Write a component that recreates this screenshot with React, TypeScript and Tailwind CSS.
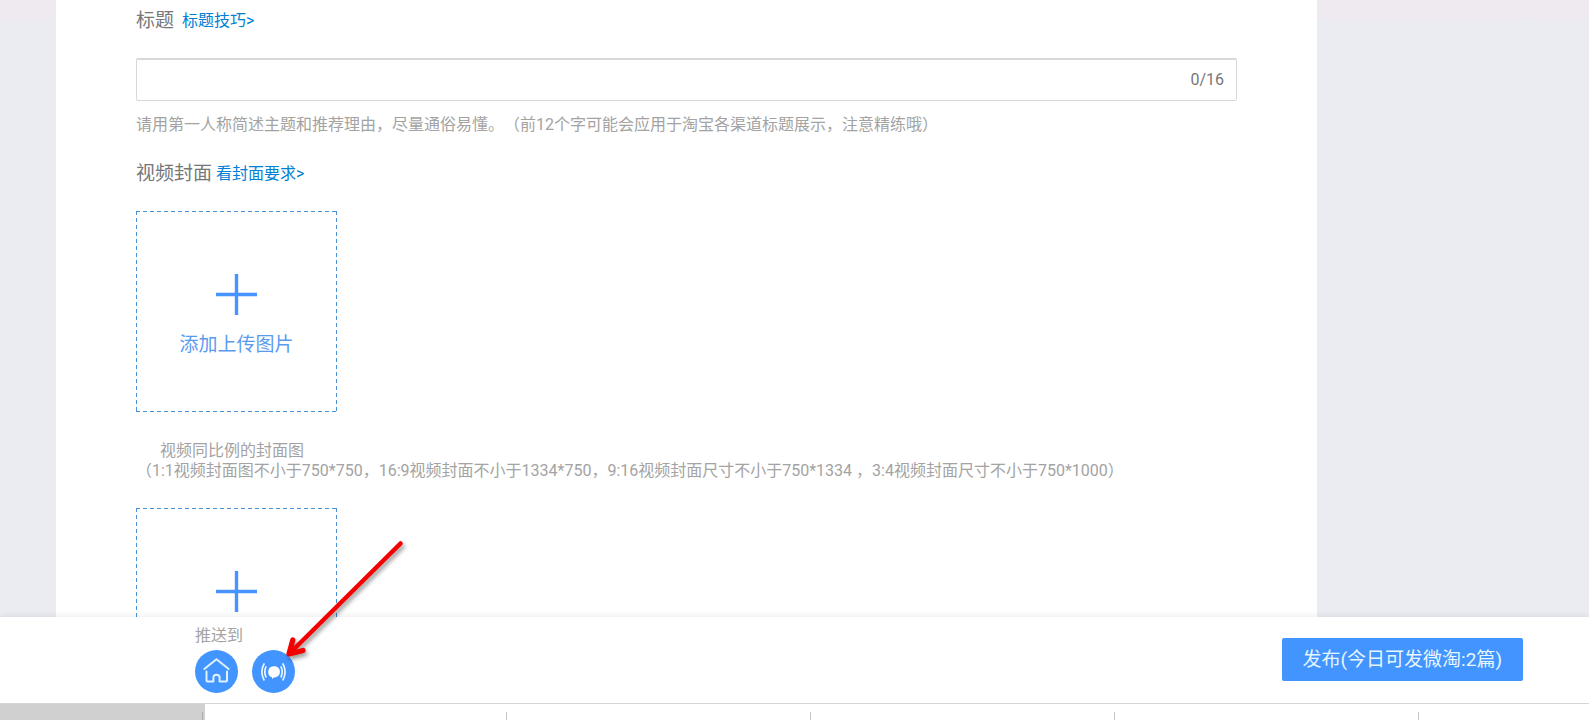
import React from "react";

function UploadBox({ caption }: { caption?: string }) {
  return (
    <button
      type="button"
      aria-label={caption ? undefined : "上传图片"}
      className="flex h-[201px] w-[201px] shrink-0 flex-col items-center bg-[image:repeating-linear-gradient(90deg,#4a90d9_0_4px,transparent_4px_7px),repeating-linear-gradient(90deg,#4a90d9_0_4px,transparent_4px_7px),repeating-linear-gradient(#4a90d9_0_4px,transparent_4px_7px),repeating-linear-gradient(#4a90d9_0_4px,transparent_4px_7px)] bg-[size:100%_1px,100%_1px,1px_100%,1px_100%] bg-[position:top,bottom,left,right] bg-no-repeat pt-[63px] text-[#5b9bee]"
    >
      <svg width="41" height="41" viewBox="0 0 41 41" stroke="#4793ff" strokeWidth="3.4" aria-hidden="true">
        <path d="M20.5 0V41M0 20.5H41" />
      </svg>
      {caption && <span className="mt-4 text-[19px] leading-7">{caption}</span>}
    </button>
  );
}

function HomeIcon() {
  return (
    <svg width="43" height="43" viewBox="0 0 43 43" fill="none" stroke="#dff2ff" strokeWidth="2" strokeLinecap="round" strokeLinejoin="round" aria-hidden="true">
      <path d="M9.3 19L21.5 9.3L33.7 19" />
      <path d="M11.5 21.5V30.5Q11.5 31.5 12.5 31.5H18.4V27.6Q18.4 24.8 21.5 24.8Q24.6 24.8 24.6 27.6V31.5H31Q32 31.5 32 30.5V21.5" />
    </svg>
  );
}

function BroadcastIcon() {
  return (
    <svg width="43" height="43" viewBox="0 0 43 43" fill="none" stroke="#e8f6ff" strokeWidth="1.7" strokeLinecap="round" aria-hidden="true">
      <path d="M21.5 16.3A5.6 5.6 0 1 1 21.8 27.4L20 29V27.2A5.6 5.6 0 0 1 21.5 16.3Z" fill="#fff" stroke="none" />
      <path d="M13.9 17Q11.7 21.5 13.9 26.8M29.1 17Q31.3 21.5 29.1 26.8M12 14Q7.8 21.5 12 29.8M31 14Q35.2 21.5 31 29.8" />
    </svg>
  );
}

const TABS = [0, 1, 2, 3, 4];

export default function App() {
  return (
    <div className="relative flex h-screen flex-col overflow-hidden bg-[#ebecf2] font-[Roboto,'Noto_Sans_CJK_SC',sans-serif] [text-spacing-trim:space-all]">
      <div className="min-h-0 flex-1 overflow-hidden bg-linear-to-b from-[#efe9f0] from-[16px] to-[#ebecf2] to-[24px] pr-[272px] pl-14">
        <main className="flex min-h-full flex-col bg-white px-20 pt-[9px]">
          <div className="flex items-center gap-2 leading-6">
            <label htmlFor="title" className="text-[19px] text-[#777]">标题</label>
            <a href="#title-tips" className="text-base text-[#0080d5]">标题技巧&gt;</a>
          </div>
          <div className="mt-[25px] flex h-[43px] items-center rounded-xs border border-t-2 border-[#d8d8d8] pr-3">
            <input id="title" type="text" maxLength={16} className="h-full min-w-0 flex-1 px-3 text-base outline-none" />
            <span className="text-base text-[#777]">0/16</span>
          </div>
          <p className="mt-3 text-base leading-6 text-[#a3a3a3]">
            请用第一人称简述主题和推荐理由，尽量通俗易懂。（前12个字可能会应用于淘宝各渠道标题展示，注意精练哦）
          </p>
          <div className="mt-[23px] flex items-center gap-1 leading-7">
            <h2 className="text-[19px] text-[#777]">视频封面</h2>
            <a href="#cover-rules" className="text-base text-[#0080d5]">看封面要求&gt;</a>
          </div>
          <div className="mt-[23px]">
            <UploadBox caption="添加上传图片" />
          </div>
          <div className="mt-[29px] text-base leading-5 text-[#a3a3a3]">
            <p className="pl-6">视频同比例的封面图</p>
            <p>（1:1视频封面图不小于750*750，16:9视频封面不小于1334*750，9:16视频封面尺寸不小于750*1334 ，3:4视频封面尺寸不小于750*1000）</p>
          </div>
          <div className="mt-[27px]">
            <UploadBox />
          </div>
        </main>
      </div>

      <footer className="relative flex h-[86px] shrink-0 items-center justify-between bg-white pr-[66px] pl-[195px] shadow-[0_-1px_6px_rgba(0,0,0,0.08)]">
        <div className="flex flex-col pb-px">
          <span className="text-base leading-5 text-[#a3a3a3]">推送到</span>
          <div className="mt-1 flex gap-[14px]">
            <button type="button" aria-label="首页" className="rounded-full bg-[#4294ff]"><HomeIcon /></button>
            <button type="button" aria-label="广播" className="rounded-full bg-[#4294ff]"><BroadcastIcon /></button>
          </div>
        </div>
        <button type="button" className="mb-px h-[43px] rounded-xs bg-[#4294ff] px-[21px] pt-0.5 text-[19px] text-[#e8f6ff]">
          发布(今日可发微淘:2篇)
        </button>
      </footer>

      <div className="relative flex h-[17px] shrink-0 overflow-hidden border-t border-[#d4d6d9] bg-white">
        <div className="flex h-full w-[205px] shrink-0 items-end justify-end bg-[#d0d0d0] pr-[2px]">
          <span className="h-2 w-px bg-[#aaa]" />
        </div>
        {TABS.map((tab) => (
          <div key={tab} className="flex h-full w-[304px] shrink-0 items-end justify-end pr-[2px]">
            <span className="h-2 w-px bg-[#c8c8c8]" />
          </div>
        ))}
      </div>

      <svg className="pointer-events-none absolute bottom-[58px] left-[282px] drop-shadow-[2px_3px_2px_rgba(0,0,0,0.4)]" width="126" height="124" viewBox="0 0 126 124" fill="none" stroke="#f30000" strokeLinecap="round" strokeLinejoin="round" aria-hidden="true">
        <path d="M118.5 5.5L7.5 115.5" strokeWidth="4.5" />
        <path d="M10.8 102L7 116L21 112.5" strokeWidth="5.2" />
      </svg>
    </div>
  );
}
